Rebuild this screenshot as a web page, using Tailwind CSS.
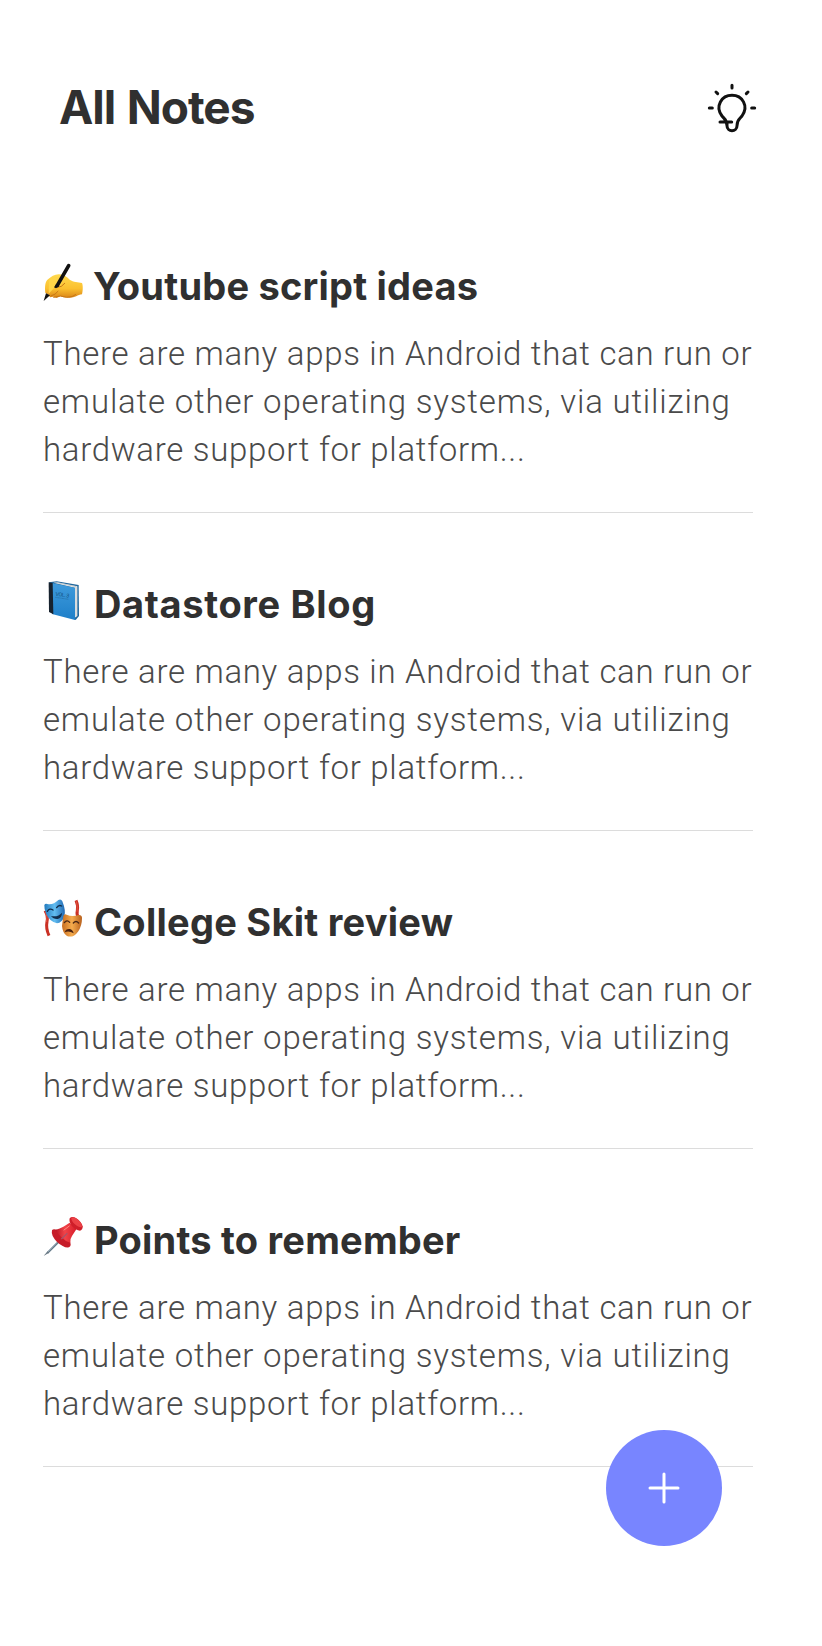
<!DOCTYPE html>
<html lang="en">
<head>
<meta charset="utf-8">
<title>All Notes</title>
<script src="https://cdn.jsdelivr.net/npm/@tailwindcss/browser@4"></script>
</head>
<body class="bg-white text-[#303030] font-['Inter',sans-serif]">
<div class="relative w-[822px] h-[1646px] overflow-hidden bg-white">
  <header class="h-[195px] pt-[74px] pl-[59px] pr-[50px] flex items-start justify-between">
    <h1 class="-mt-px text-[46px] leading-[68px] font-bold tracking-[-1px] [word-spacing:1.5px] whitespace-nowrap">All Notes</h1>
    <svg class="w-20 h-[75px] -mt-1 mr-[2px]" viewBox="0 0 240 225" fill="none" stroke="#111" stroke-width="9" stroke-linecap="round" stroke-linejoin="round">
      <path d="M126 46v8M78 66l5 5M174 66l-5 5M58 114h9M185 114h9"/>
      <path d="M90 156h35M111 167C111 149 104 148 96 138C74 108 95 76 126 76C157 76 177 108 156 138C147 149 141 149 141 167C141 187 111 187 111 167V160"/>
    </svg>
  </header>
  <main class="px-[43px]">
    <article class="w-[710px] h-[318px] pt-[67px] border-b border-[#dcdcdc]">
      <div class="flex items-start h-12">
        <svg class="w-10 h-10 mt-px shrink-0 overflow-visible" viewBox="21 24 120 120">
          <defs><linearGradient id="hand" x1="0" y1="0" x2="0" y2="1"><stop offset="0" stop-color="#ffda4f"/><stop offset=".6" stop-color="#fbc02f"/><stop offset="1" stop-color="#d98418"/></linearGradient></defs>
          <path fill="url(#hand)" d="M28 114C26 97 27 80 36 73C45 65 57 57 70 58C84 59 92 65 101 74C112 82 127 80 138 84C142 94 140 110 138 118C125 120 117 128 101 128L82 127L73 124L62 129L52 125L42 127L38 119Z"/>
          <path fill="none" stroke="#c87716" stroke-width="3" stroke-linecap="round" d="M45 123Q59 119 66 109M53 127L73 123L92 127Q110 127 119 119M62 97L76 94L86 85"/>
          <path fill="#ffd548" d="M39 76Q47 69 58 68L70 74L79 82L73 93L56 97L38 116Z"/>
          <path stroke="#111" stroke-width="11" stroke-linecap="round" d="M98 32L64 91"/>
          <path fill="#111" d="M60 88L69 94L60 100L54 97ZM30 115L42 121L23 138Z"/>
        </svg>
        <h2 class="ml-[10px] text-[38px] leading-[48px] font-bold tracking-[0.22px] whitespace-nowrap">Youtube script ideas</h2>
      </div>
      <p class="mt-5 text-[33px] leading-[48px] font-light tracking-[0.7px] text-[#4a4a4a] font-['Roboto',sans-serif] whitespace-nowrap">There are many apps in Android that can run or<br><span class="tracking-[0.81px]">emulate other operating systems, via utilizing</span><br>hardware support for platform...</p>
    </article>
    <article class="w-[710px] h-[318px] pt-[67px] border-b border-[#dcdcdc]">
      <div class="flex items-start h-12">
        <svg class="w-10 h-10 mt-px shrink-0 overflow-visible" viewBox="21 27 120 120">
          <defs><linearGradient id="cover" x1="0" y1="0" x2="0" y2="1"><stop offset="0" stop-color="#3e9bdc"/><stop offset="1" stop-color="#1e7fc9"/></linearGradient></defs>
          <path fill="#20679d" d="M39 31L62 28L128 39L129 132L119 144L108 138Z"/>
          <path fill="#e9ecec" d="M52 32L64 31L124 43V132L116 137V47Z"/>
          <path stroke="#a9afb2" stroke-width="1.5" d="M58 31L120 44V134"  fill="none"/>
          <path fill="url(#cover)" d="M47 33L117 47V144L48 126Z"/>
          <path fill="#17222e" d="M38 31L50 33L52 127L39 120Z"/>
          <text x="58" y="71" font-size="16" font-family="Roboto" fill="#14527f" textLength="41" transform="rotate(8 58 71)">VOL. 3</text>
          <path stroke="#236b9e" stroke-width="2" stroke-dasharray="3 1" d="M58 76L98 82"/>
        </svg>
        <h2 class="ml-[11px] text-[38px] leading-[48px] font-bold tracking-[0.65px] whitespace-nowrap">Datastore Blog</h2>
      </div>
      <p class="mt-5 text-[33px] leading-[48px] font-light tracking-[0.7px] text-[#4a4a4a] font-['Roboto',sans-serif] whitespace-nowrap">There are many apps in Android that can run or<br><span class="tracking-[0.81px]">emulate other operating systems, via utilizing</span><br>hardware support for platform...</p>
    </article>
    <article class="w-[710px] h-[318px] pt-[67px] border-b border-[#dcdcdc]">
      <div class="flex items-start h-12">
        <svg class="w-10 h-10 mt-px shrink-0 overflow-visible" viewBox="21 27 120 120">
          <defs><linearGradient id="blue"><stop stop-color="#237abd"/><stop offset=".5" stop-color="#62bdf1"/><stop offset="1" stop-color="#2068b2"/></linearGradient><linearGradient id="orange"><stop stop-color="#c86d20"/><stop offset=".5" stop-color="#f5ac4e"/><stop offset="1" stop-color="#b8601c"/></linearGradient></defs>
          <path fill="none" stroke="#ca3024" stroke-width="9" d="M27 62Q37 78 33 95Q29 115 39 137M120 31Q127 47 124 61Q121 75 128 84"/>
          <path fill="none" stroke="#ed6550" stroke-width="2" d="M29 66Q35 80 32 96M121 34Q126 50 123 65"/>
          <path fill="url(#blue)" d="M25 45Q28 39 34 42Q51 46 67 30Q75 25 79 34Q90 61 85 80Q78 98 63 100Q40 94 31 73Q24 57 25 45Z"/>
          <path fill="none" stroke="#102c49" stroke-width="4" stroke-linecap="round" d="M34 64Q41 53 51 60M62 53Q68 43 77 48"/>
          <path fill="#112e4d" d="M45 78Q66 82 78 68Q78 84 65 87Q52 88 45 78Z"/>
          <path fill="url(#orange)" d="M82 78Q84 71 92 74Q108 82 128 75Q137 74 138 83Q138 108 126 125Q111 145 93 138Q80 130 78 108Z"/>
          <path fill="none" stroke="#4a2613" stroke-width="4" stroke-linecap="round" d="M85 98Q93 88 101 97M112 99Q120 90 128 99"/>
          <path fill="#4a2210" d="M86 127Q89 116 101 117Q111 119 113 130Q98 121 86 127Z"/>
        </svg>
        <h2 class="ml-[11px] text-[38px] leading-[48px] font-bold tracking-[0.25px] whitespace-nowrap">College Skit review</h2>
      </div>
      <p class="mt-5 text-[33px] leading-[48px] font-light tracking-[0.7px] text-[#4a4a4a] font-['Roboto',sans-serif] whitespace-nowrap">There are many apps in Android that can run or<br><span class="tracking-[0.81px]">emulate other operating systems, via utilizing</span><br>hardware support for platform...</p>
    </article>
    <article class="w-[710px] h-[318px] pt-[67px] border-b border-[#dcdcdc]">
      <div class="flex items-start h-12">
        <svg class="w-10 h-10 mt-px shrink-0 overflow-visible" viewBox="21 27 120 120">
          <defs><linearGradient id="red"><stop stop-color="#b91524"/><stop offset=".45" stop-color="#f14449"/><stop offset="1" stop-color="#d71c29"/></linearGradient></defs>
          <path stroke="#627888" stroke-width="6" d="M76 93L34 135"/>
          <path stroke="#b9c9d3" stroke-width="2.5" d="M75 91L27 140"/>
          <path fill="#687782" d="M35 130L39 134L23 144Z"/>
          <path fill="#c61c29" d="M48 67Q51 61 63 65Q87 74 101 99Q108 113 99 118Q84 121 63 102Q44 82 48 67Z"/>
          <path fill="url(#red)" d="M58 66Q72 62 82 56L101 44L122 62L108 84Q101 94 103 104Q88 100 75 86Q62 73 58 66Z"/>
          <path fill="#cf1e2a" d="M101 31Q108 23 121 31Q136 41 140 55Q141 65 132 68Q120 67 107 53Q98 41 101 31Z"/>
          <path fill="#eb4146" d="M106 29Q115 24 127 36Q139 47 138 57Q130 60 116 48Q105 38 106 29Z"/>
          <path stroke="#ff8580" stroke-width="3" stroke-linecap="round" fill="none" d="M84 66L100 54"/>
          <path stroke="#a9546a" stroke-width="4" d="M76 93L94 76"/>
        </svg>
        <h2 class="ml-[11px] text-[38px] leading-[48px] font-bold tracking-[0.22px] whitespace-nowrap">Points to remember</h2>
      </div>
      <p class="mt-5 text-[33px] leading-[48px] font-light tracking-[0.7px] text-[#4a4a4a] font-['Roboto',sans-serif] whitespace-nowrap">There are many apps in Android that can run or<br><span class="tracking-[0.81px]">emulate other operating systems, via utilizing</span><br>hardware support for platform...</p>
    </article>
  </main>
  <button aria-label="Add note" class="absolute left-[606px] top-[1430px] w-[116px] h-[116px] rounded-full bg-[#7885ff] flex items-center justify-center">
    <svg class="w-9 h-9" viewBox="0 0 36 36" stroke="white" stroke-width="3" stroke-linecap="round"><path d="M18 4v28M4 18h28"/></svg>
  </button>
</div>
</body>
</html>
